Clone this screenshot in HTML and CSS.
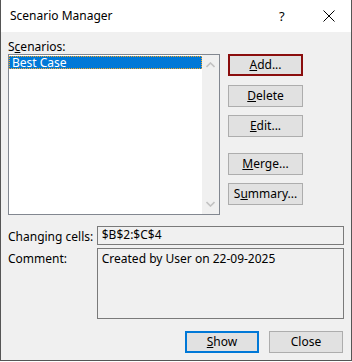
FILE: index.html
```html
<!DOCTYPE html>
<html lang="en">
<head>
  <meta charset="UTF-8">
  <title>Scenario Manager</title>
  <link rel="stylesheet" href="styles.css">
</head>
<body>

<div class="dialog">
  <div class="titlebar">
    <span class="title">Scenario Manager</span>
    <span class="help">?</span>
    <span class="close-x">
      <svg width="12" height="12" viewBox="0 0 12 12">
        <path d="M0.5 0.5 L11.5 11.5 M11.5 0.5 L0.5 11.5" stroke="#000" stroke-width="1" fill="none"/>
      </svg>
    </span>
  </div>

  <div class="content">
    <div class="label scen-label">S<u>c</u>enarios:</div>

    <div class="top-row">
      <div class="listbox">
        <div class="items">
          <div class="item selected">Best Case</div>
        </div>
        <div class="scrollbar">
          <svg width="9" height="6" viewBox="0 0 9 6"><path d="M0.5 5 L4.5 1 L8.5 5" stroke="#c2c2c2" stroke-width="1.6" fill="none"/></svg>
          <svg width="9" height="6" viewBox="0 0 9 6"><path d="M0.5 1 L4.5 5 L8.5 1" stroke="#c2c2c2" stroke-width="1.6" fill="none"/></svg>
        </div>
      </div>

      <div class="side-buttons">
        <button class="btn btn-default"><u>A</u>dd...</button>
        <button class="btn btn-delete"><u>D</u>elete</button>
        <button class="btn btn-edit"><u>E</u>dit...</button>
        <button class="btn btn-merge"><u>M</u>erge...</button>
        <button class="btn btn-summary">S<u>u</u>mmary...</button>
      </div>
    </div>

    <div class="field-row cells-row">
      <div class="label field-label">Changing cells:</div>
      <div class="field">$B$2:$C$4</div>
    </div>

    <div class="field-row">
      <div class="label field-label">Comment:</div>
      <div class="field comment">Created by User on 22-09-2025</div>
    </div>

    <div class="footer">
      <button class="btn btn-focus"><u>S</u>how</button>
      <button class="btn">Close</button>
    </div>
  </div>
</div>

</body>
</html>
```

FILE: styles.css
```css
body {
  margin: 0;
  background: #ffffff;
  font-family: "Noto Sans", "Open Sans", sans-serif;
  font-size: 12px;
  color: #000;
}

.dialog {
  width: 352px;
  height: 361px;
  box-sizing: border-box;
  border: 1px solid #555555;
  border-top: none;
  background: #f0f0f0;
  display: flex;
  flex-direction: column;
}

.titlebar {
  height: 32px;
  background: #ffffff;
  display: flex;
  align-items: center;
  padding-left: 9px;
  padding-bottom: 1px;
  box-sizing: border-box;
}

.title {
  flex: 1;
  font-size: 12px;
}

.help {
  width: 14px;
  margin-right: 30px;
  font-size: 13px;
}

.close-x {
  display: flex;
  margin-right: 16px;
}

.content {
  padding: 0 7px 0 7px;
}

.label {
  line-height: 15px;
}

.scen-label {
  padding-top: 7px;
}

.top-row {
  display: flex;
}

/* Scenario list */
.listbox {
  width: 212px;
  height: 161px;
  box-sizing: border-box;
  border: 1px solid #828790;
  background: #ffffff;
  display: flex;
}

.items {
  flex: 1;
  padding-top: 1px;
}

.item {
  height: 13px;
  line-height: 12px;
  padding-left: 2px;
  box-sizing: border-box;
}

.selected {
  background: #0078d7;
  color: #ffffff;
  border: 1px dotted #f5a623;
}

.scrollbar {
  width: 17px;
  background: #f0f0f0;
  display: flex;
  flex-direction: column;
  justify-content: space-between;
  align-items: center;
  padding: 7px 0 7px;
  box-sizing: border-box;
}

.side-buttons {
  margin-left: 8px;
  display: flex;
  flex-direction: column;
}

.btn {
  width: 75px;
  height: 22px;
  box-sizing: border-box;
  border: 1px solid #adadad;
  background: #e1e1e1;
  font-family: inherit;
  font-size: 12px;
  color: #000;
  padding: 0;
  line-height: 18px;
}

.btn-default {
  border: 2px solid #8b0e0e;
}

.btn-delete { margin-top: 9px; }
.btn-edit { margin-top: 8px; }
.btn-merge { margin-top: 16px; }
.btn-summary { margin-top: 8px; }

/* Fields */
.field-row {
  display: flex;
  margin-top: 3px;
}

.cells-row {
  margin-top: 11px;
}

.field-label {
  width: 89px;
  padding-top: 3px;
}

.field {
  width: 248px;
  height: 19px;
  box-sizing: border-box;
  border: 1px solid #7a7a7a;
  padding-left: 4px;
  line-height: 16px;
}

.comment {
  height: 71px;
  padding-top: 2px;
}

.footer {
  display: flex;
  justify-content: flex-end;
  gap: 10px;
  margin-top: 12px;
  padding-right: 1px;
}

.footer .btn {
  width: 74px;
}

.btn-focus {
  border: 2px solid #0078d7;
}
```
